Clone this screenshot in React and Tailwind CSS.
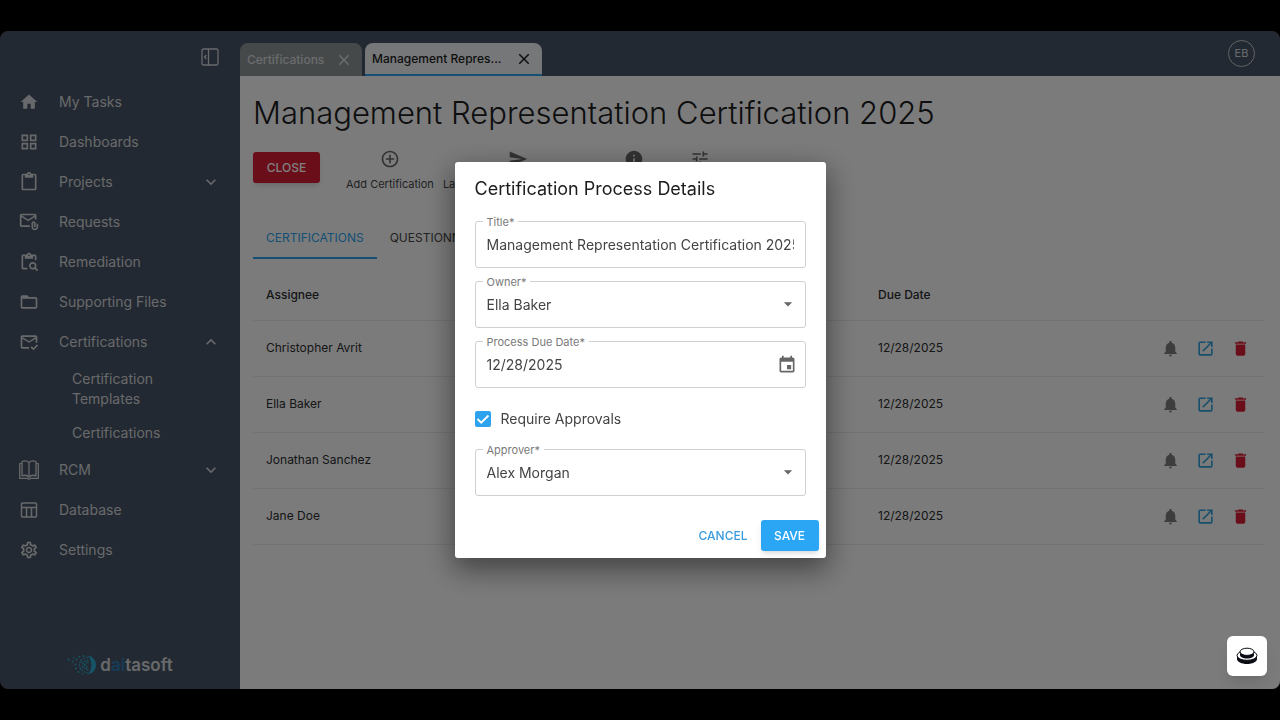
import React, { useState } from 'react';
import {
  MdHome,
  MdOutlineGridView,
  MdContentPaste,
  MdOutlineAttachEmail,
  MdContentPasteSearch,
  MdFolderOpen,
  MdOutlineMarkEmailRead,
  MdOutlineSettings,
  MdExpandMore,
  MdExpandLess,
  MdClose,
  MdAddCircleOutline,
  MdSend,
  MdInfo,
  MdTune,
  MdNotifications,
  MdOpenInNew,
  MdDelete,
  MdArrowDropDown,
  MdEvent
} from 'react-icons/md';

// --- Icons that the Material set does not have ---
const BookIcon = ({ className }) => (
  <svg viewBox="0 0 20 20" fill="none" stroke="currentColor" strokeWidth="1.3" strokeLinejoin="round" className={className} aria-hidden="true">
    <path d="M10 2.600C8.600.9 5.800.5 3 1.500v14.300c2.600-.9 5.500-.5 7 1.300 1.500-1.800 4.400-2.200 7-1.300V1.500C14.200.5 11.400.9 10 2.600z" />
    <path d="M10 2.600v14.500M3 3.600H.7v14.800h7.800c.6.900 2.400.9 3 0h7.800V3.600H17" />
  </svg>
);

const TableIcon = ({ className }) => (
  <svg viewBox="0 0 20 20" fill="none" stroke="currentColor" strokeWidth="1.5" className={className} aria-hidden="true">
    <rect x="2.500" y="3" width="15" height="14" rx="1" />
    <path d="M2.500 7.500h15M7.500 7.500V17M12.500 7.500V17" />
  </svg>
);

const PanelIcon = ({ className }) => (
  <svg viewBox="0 0 18 18" fill="none" stroke="currentColor" strokeWidth="1.300" className={className} aria-hidden="true">
    <rect x="1" y="1" width="16" height="16" rx="1.500" />
    <path d="M7.500 1v16M5.300 7L3.600 9l1.700 2" />
  </svg>
);

const LogoMark = ({ className }) => (
  <svg viewBox="0 0 30 20" className={className} aria-hidden="true">
    <path d="M20.500.6c5 .6 8.500 4.600 8.500 9.400s-3.500 8.800-8.500 9.400c2.600-2.400 3.800-5.600 3.800-9.400s-1.200-7-3.800-9.400z" fill="#2aa9cf" />
    <g fill="none" stroke="#2f9dbd" strokeWidth="1.200" strokeDasharray="2 1">
      <path d="M21 2.200c-4.500.2-8.500 3.300-8.500 7.800s4 7.600 8.500 7.800" />
      <path d="M21.500 5c-3.500.2-6 2.200-6 5s2.500 4.800 6 5" />
      <path d="M22 7.500c-2 .2-3.500 1.200-3.500 2.500s1.500 2.300 3.500 2.500" />
      <path d="M13 5l8 10M13 15l8-10" />
    </g>
    <g fill="#2aa9cf">
      <circle cx="1.500" cy="4.500" r="1" />
      <circle cx="6.500" cy="2.500" r=".8" />
      <circle cx="5.500" cy="6.500" r=".9" />
      <circle cx="9.500" cy="4.500" r="1.100" />
      <circle cx="8.500" cy="9.500" r=".9" />
      <circle cx="9" cy="13.500" r="1" />
      <circle cx="11.500" cy="17" r=".9" />
      <circle cx="12.500" cy="1.800" r="1" />
      <circle cx="15.500" cy="18.800" r=".9" />
      <circle cx="16.500" cy="1" r=".9" />
      <circle cx="5" cy="10.800" r=".6" />
    </g>
  </svg>
);

const PuckIcon = ({ className }) => (
  <svg viewBox="0 0 22 18" className={className} aria-hidden="true">
    <path d="M1 8.500v3.500c0 2.800 4.500 5 10 5s10-2.200 10-5V8.500z" fill="#0b0d14" />
    <ellipse cx="11" cy="8.500" rx="10" ry="4.800" fill="#fff" stroke="#0b0d14" strokeWidth="1" />
    <path d="M4 5v3c0 2 3.200 3.600 7 3.600S18 10 18 8V5z" fill="#0b0d14" />
    <ellipse cx="11" cy="4.800" rx="7" ry="3.600" fill="#fff" stroke="#0b0d14" strokeWidth="1" />
  </svg>
);

const navItems = [
  { label: 'My Tasks', icon: MdHome },
  { label: 'Dashboards', icon: MdOutlineGridView },
  { label: 'Projects', icon: MdContentPaste, expandable: true },
  { label: 'Requests', icon: MdOutlineAttachEmail },
  { label: 'Remediation', icon: MdContentPasteSearch },
  { label: 'Supporting Files', icon: MdFolderOpen },
  {
    label: 'Certifications',
    icon: MdOutlineMarkEmailRead,
    expandable: true,
    children: ['Certification Templates', 'Certifications']
  },
  { label: 'RCM', icon: BookIcon, expandable: true },
  { label: 'Database', icon: TableIcon },
  { label: 'Settings', icon: MdOutlineSettings }
];

const rows = [
  { assignee: 'Christopher Avrit', due: '12/28/2025' },
  { assignee: 'Ella Baker', due: '12/28/2025' },
  { assignee: 'Jonathan Sanchez', due: '12/28/2025' },
  { assignee: 'Jane Doe', due: '12/28/2025' }
];

const Sidebar = () => (
  <aside className="flex w-60 shrink-0 flex-col text-[#d0d2d6]">
    <div className="flex h-[51px] items-center justify-end pr-[21px]">
      <button type="button" aria-label="Collapse menu">
        <PanelIcon className="size-[18px]" />
      </button>
    </div>
    <nav className="text-sm">
      <ul>
        {navItems.map(({ label, icon: Icon, expandable, children }) => (
          <li key={label}>
            <a href="#" className="flex h-10 items-center gap-5 px-[19px]">
              <Icon className="size-5 shrink-0" />
              <span className="flex-1">{label}</span>
              {expandable && (children ? <MdExpandLess className="size-5" /> : <MdExpandMore className="size-5" />)}
            </a>
            {children && (
              <ul>
                {children.map((child) => (
                  <li key={child}>
                    <a href="#" className="block py-[7px] pr-16 pl-[72px] leading-5">{child}</a>
                  </li>
                ))}
              </ul>
            )}
          </li>
        ))}
      </ul>
    </nav>
    <div className="mt-auto flex items-center justify-center gap-[3px] pb-3">
      <LogoMark className="h-5 w-[30px]" />
      <span className="text-[17px] leading-6 font-semibold">
        d<span className="text-[#2a78b0]">ai</span>tasoft
      </span>
    </div>
  </aside>
);

const ToolbarAction = ({ icon: Icon, label, name, className }) => (
  <button
    type="button"
    aria-label={name}
    className={`flex flex-col items-center gap-[7px] text-[11px] leading-4 whitespace-nowrap text-[#444] ${className || ''}`}
  >
    <Icon className="size-5 text-[#666]" />
    {label}
  </button>
);

const Content = () => (
  <main className="flex-1 bg-[#f7f7f8] pr-4 pl-[13px]">
    <h1 className="pt-[17px] text-[31px] leading-10 font-light text-[#1c1c1e]">Management Representation Certification 2025</h1>

    <div className="mt-4 flex items-start">
      <button type="button" className="mt-[3px] h-[31px] w-[67px] rounded-[3px] bg-[#d41c33] text-xs font-medium text-white shadow-md">CLOSE</button>
      <div className="ml-[26px] flex gap-[10px]">
        <ToolbarAction icon={MdAddCircleOutline} label="Add Certification" />
        <ToolbarAction icon={MdSend} label="Launch Certification Process" className="w-[148px]" />
        <ToolbarAction icon={MdInfo} name="Details" className="w-16" />
        <ToolbarAction icon={MdTune} name="Filters" className="w-12" />
      </div>
    </div>

    <div role="tablist" className="mt-[27px] flex text-xs">
      <button type="button" role="tab" aria-selected="true" className="h-10 border-b-2 border-[#2b9fe8] px-[13px] text-[#2b9fe8]">CERTIFICATIONS</button>
      <button type="button" role="tab" aria-selected="false" className="h-10 border-b-2 border-transparent px-[13px] text-[#444]">QUESTIONNAIRE</button>
    </div>

    <table className="mt-3 w-full table-fixed text-left text-xs text-[#2c2c2e]">
      <thead>
        <tr className="h-[49px] border-b border-[#e6e6e8]">
          <th className="px-[13px] font-medium">Assignee</th>
          <th className="w-[400px] px-[14px] font-medium">Due Date</th>
        </tr>
      </thead>
      <tbody>
        {rows.map((row) => (
          <tr key={row.assignee} className="h-14 border-b border-[#e6e6e8]">
            <td className="px-[13px]">{row.assignee}</td>
            <td className="px-[14px]">
              <div className="flex items-center justify-between">
                {row.due}
                <div className="flex gap-4">
                  <button type="button" aria-label="Notify"><MdNotifications className="size-[19px] text-[#7a7a7c]" /></button>
                  <button type="button" aria-label="Open"><MdOpenInNew className="size-[19px] text-[#2b9fd8]" /></button>
                  <button type="button" aria-label="Delete"><MdDelete className="size-[19px] text-[#d41c33]" /></button>
                </div>
              </div>
            </td>
          </tr>
        ))}
      </tbody>
    </table>
  </main>
);

// Outlined field with its label sitting on the border
const Field = ({ id, label, children }) => (
  <div className="relative h-[47px] rounded-[3px] border border-[#d0d0d0]">
    <label htmlFor={id} className="absolute -top-2 left-[7px] bg-white px-1 text-[11px] leading-4 text-[#7a7a7a]">{label}*</label>
    {children}
  </div>
);

const SelectField = ({ id, label, options }) => (
  <Field id={id} label={label}>
    <select id={id} className="h-full w-full appearance-none bg-transparent px-[11px] outline-none">
      {options.map((o) => <option key={o}>{o}</option>)}
    </select>
    <MdArrowDropDown className="pointer-events-none absolute top-3 right-[7px] size-5 text-[#666]" />
  </Field>
);

const DetailsModal = () => {
  const [title, setTitle] = useState('Management Representation Certification 2025');
  const [dueDate, setDueDate] = useState('12/28/2025');
  const [requireApprovals, setRequireApprovals] = useState(true);

  return (
    <div className="fixed inset-0 z-10 flex items-center justify-center bg-black/50">
      <form role="dialog" aria-labelledby="dialog-title" className="w-[371px] rounded-[3px] bg-white text-sm text-[#444] shadow-[0_10px_28px_2px_rgba(0,0,0,0.45)]">
        <div className="px-5 pt-[15px]">
          <h2 id="dialog-title" className="mb-5 text-lg leading-6 text-[#1c1c1e]">Certification Process Details</h2>
          <div className="flex flex-col gap-[13px]">
            <Field id="title" label="Title">
              <input id="title" className="mx-[11px] h-full w-[307px] bg-transparent outline-none" value={title} onChange={(e) => setTitle(e.target.value)} />
            </Field>
            <SelectField id="owner" label="Owner" options={['Ella Baker']} />
            <Field id="due" label="Process Due Date">
              <div className="flex h-full items-center pr-2 pl-[11px]">
                <input id="due" className="min-w-0 flex-1 bg-transparent outline-none" value={dueDate} onChange={(e) => setDueDate(e.target.value)} />
                <button type="button" aria-label="Choose date"><MdEvent className="size-5 text-[#666]" /></button>
              </div>
            </Field>
          </div>
          <label className="flex h-[61px] items-center gap-[10px]">
            <span className="relative size-4">
              <input
                type="checkbox"
                className="block size-4 appearance-none rounded-[2px] border-2 border-[#777] checked:border-[#2da2ee] checked:bg-[#2da2ee]"
                checked={requireApprovals}
                onChange={(e) => setRequireApprovals(e.target.checked)}
              />
              {requireApprovals && (
                <svg viewBox="0 0 16 16" fill="none" stroke="#fff" strokeWidth="1.800" className="pointer-events-none absolute inset-0" aria-hidden="true">
                  <path d="M2.500 8l3.700 3.700L13.500 4.500" />
                </svg>
              )}
            </span>
            Require Approvals
          </label>
          <SelectField id="approver" label="Approver" options={['Alex Morgan']} />
        </div>
        <div className="flex justify-end px-[7px] pt-6 pb-[7px] text-xs font-medium">
          <button type="button" className="h-[31px] px-[13px] text-[#3a9bdc]">CANCEL</button>
          <button type="submit" className="h-[31px] w-[58px] rounded-[3px] bg-[#2ba6f5] text-white shadow-md">SAVE</button>
        </div>
      </form>
    </div>
  );
};

const App = () => (
  <div className="min-h-screen bg-black py-[31px] font-['Inter',sans-serif]">
    <div className="flex min-h-[calc(100vh-62px)] overflow-hidden rounded-lg bg-[#475264]">
      <Sidebar />
      <div className="flex min-w-0 flex-1 flex-col">
        <header className="flex h-[45px] items-end gap-[3px] text-xs font-medium">
          <div className="flex h-[33px] w-[122px] items-center justify-between rounded-t-lg bg-[#8a9394] px-[7px] text-[#d6d8da]">
            Certifications
            <button type="button" aria-label="Close tab" className="mr-[2px]"><MdClose className="size-[18px]" /></button>
          </div>
          <div className="flex h-[33px] w-[177px] items-center justify-between rounded-t-lg border-b-2 border-[#2b9fe8] bg-[#eceff0] px-[7px] text-[#1c1c1e]">
            Management Repres...
            <button type="button" aria-label="Close tab" className="mr-[2px]"><MdClose className="size-[18px]" /></button>
          </div>
          <button type="button" className="mr-[25px] mb-[9px] ml-auto size-[27px] rounded-full border border-[#c6c8cc] text-[11px] font-normal text-[#d0d2d6]">EB</button>
        </header>
        <Content />
      </div>
    </div>

    <DetailsModal />

    <button type="button" aria-label="Open assistant" className="fixed right-[13px] bottom-11 z-20 flex size-10 items-center justify-center rounded-md bg-white shadow-lg">
      <PuckIcon className="h-[18px] w-[22px]" />
    </button>
  </div>
);

export default App;
